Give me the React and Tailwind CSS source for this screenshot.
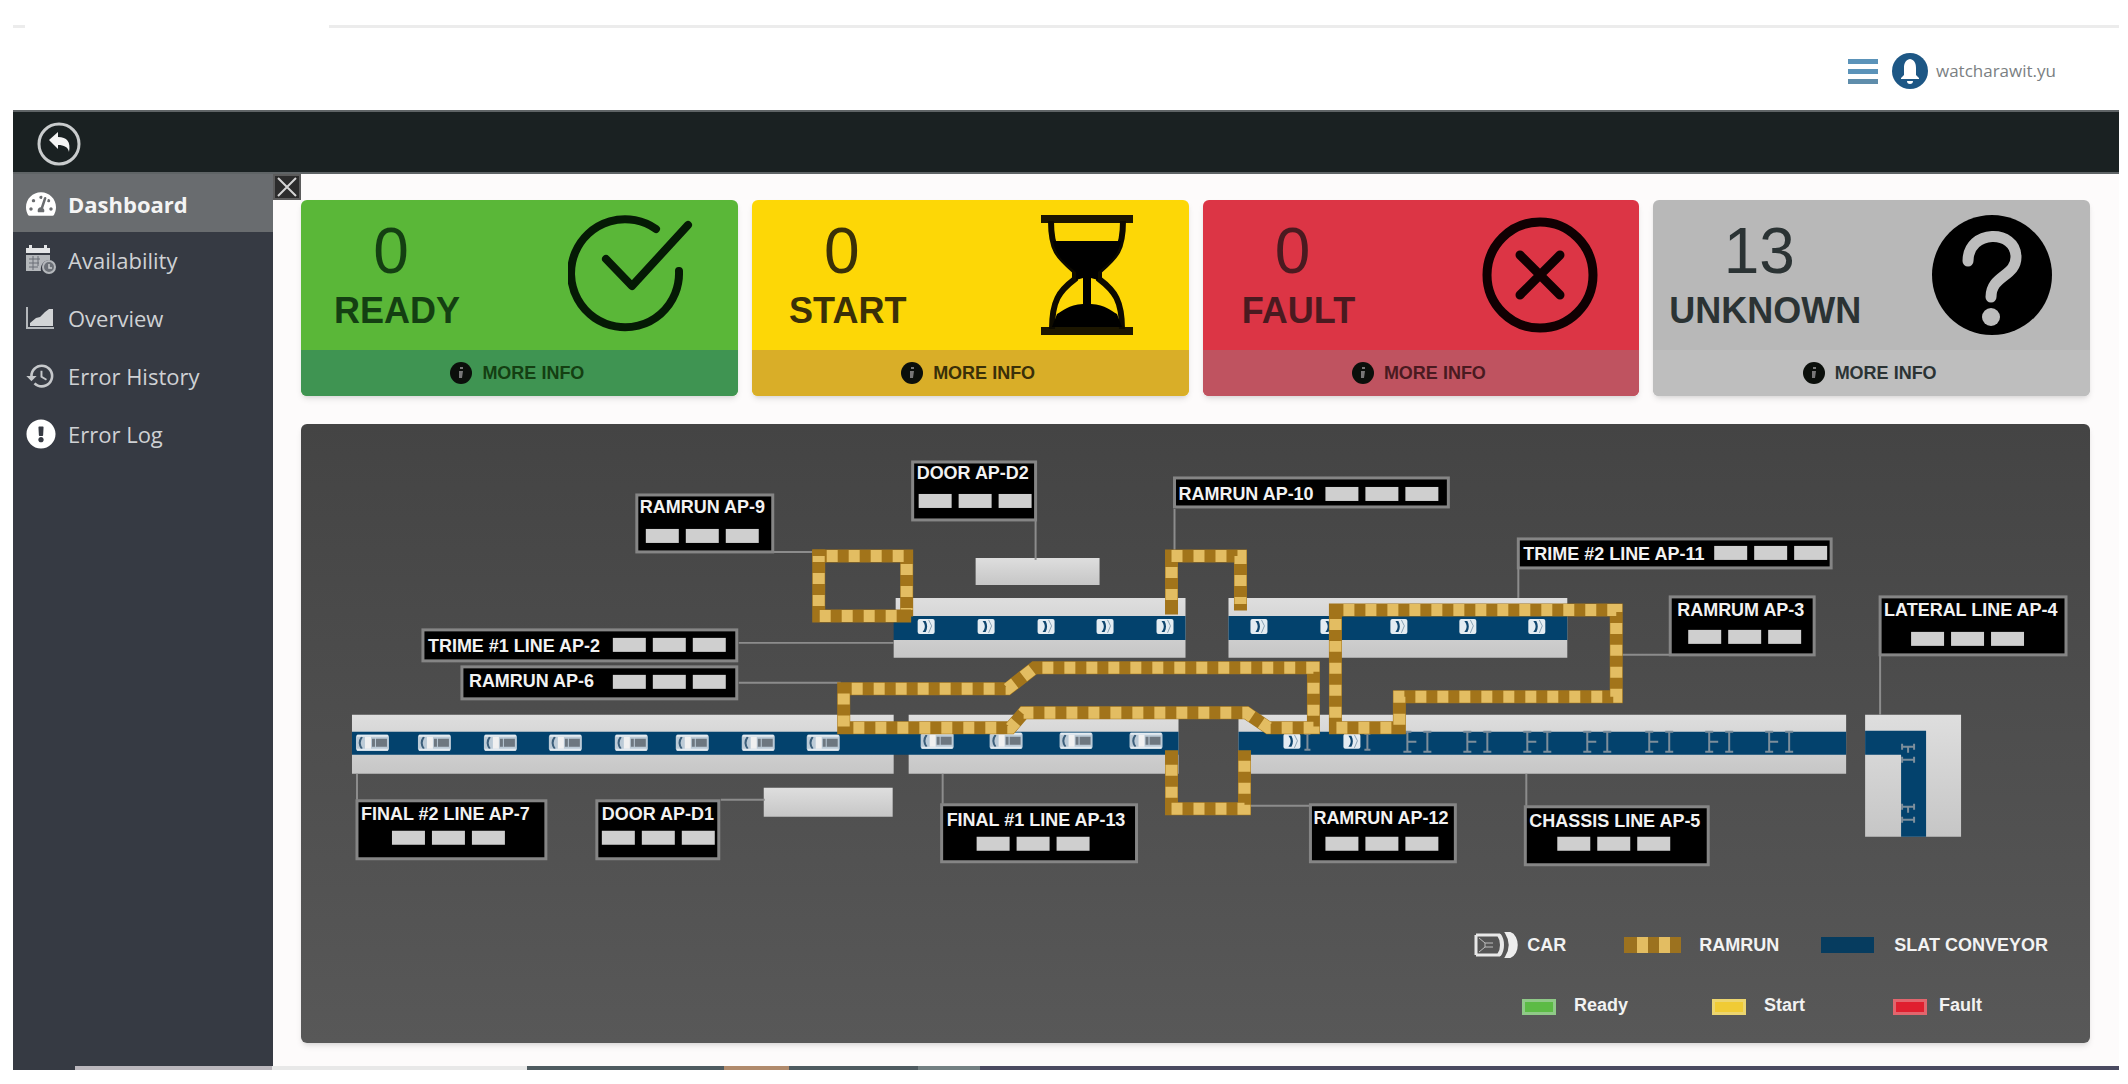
import React from "react";
import { FaTachometerAlt, FaExclamationCircle } from "react-icons/fa";
import { MdHistory } from "react-icons/md";

function CalendarClockIcon() {
  return (
    <svg viewBox="0 0 30 30" className="h-[30px] w-[30px]" aria-hidden="true">
      <path d="M0 3h3V0h3v3h12V0h3v3h3v5H0z" fill="#e4e5e7" />
      <path d="M0 10h24v5a9 9 0 0 0-9 11H0z" fill="#b4b7bb" />
      <path d="M3 14h11M3 18h10M3 22h9M7 11v14M12 11v10" stroke="#6a6e76" strokeWidth="1" />
      <circle cx="23" cy="22" r="6" fill="#6c7077" stroke="#b4b7bb" strokeWidth="2" />
      <path d="M23 19v4h3" fill="none" stroke="#c9cbce" strokeWidth="1.5" />
    </svg>
  );
}

function AreaChartIcon() {
  return (
    <svg viewBox="0 0 30 24" className="h-6 w-[30px]" aria-hidden="true">
      <path d="M1 1v21h27" fill="none" stroke="#b4b7bb" strokeWidth="2" />
      <path d="M4 20v-3l6-5 4-1 5-5 4-3h4v17z" fill="#d2d4d6" />
    </svg>
  );
}

const NAV = [
  { label: "Dashboard", active: true, icon: <FaTachometerAlt size={30} className="text-white" /> },
  { label: "Availability", icon: <CalendarClockIcon /> },
  { label: "Overview", icon: <AreaChartIcon /> },
  { label: "Error History", icon: <MdHistory size={32} className="text-[#c6c8cb]" /> },
  { label: "Error Log", icon: <FaExclamationCircle size={30} className="text-white" /> },
];

function CheckRingIcon() {
  return (
    <svg viewBox="0 0 125 120" className="mr-2.5 h-[120px] w-[125px]" fill="none" stroke="#051a05" strokeWidth="8" strokeLinecap="round" strokeLinejoin="round" aria-hidden="true">
      <path d="M88 14A54 54 0 1 0 111 56" />
      <path d="M38 44l26 27L120 10" />
    </svg>
  );
}

function HourglassIcon() {
  return (
    <svg viewBox="0 0 125 120" className="mr-1 h-[120px] w-[125px]" fill="none" aria-hidden="true">
      <path d="M16 0h92v8H16zM16 112h92v8H16z" fill="#1c1600" />
      <path d="M26 6c0 30 8 36 24 50v8C34 76 27 86 27 114M98 6c0 30-8 36-24 50v8c16 12 23 22 23 50" stroke="#0d0a00" strokeWidth="6" />
      <path d="M28 26h68c-3 16-12 22-23 31v8l-7-2v26c15 1 20 7 26 10l5 13H27l5-13c6-3 11-9 26-10V63l-7 2v-8C40 48 31 42 28 26z" fill="#000" />
    </svg>
  );
}

function CrossRingIcon() {
  return (
    <svg viewBox="0 0 125 120" className="mr-0.5 h-[120px] w-[125px]" fill="none" stroke="#100002" strokeLinecap="round" aria-hidden="true">
      <circle cx="63" cy="60" r="53" strokeWidth="9" />
      <path d="M43 40l40 40M83 40L43 80" strokeWidth="9" />
    </svg>
  );
}

function QuestionDiscIcon() {
  return (
    <svg viewBox="0 0 125 120" className="h-[120px] w-[125px]" fill="none" aria-hidden="true">
      <circle cx="62" cy="60" r="60" fill="#000" />
      <path d="M38 46c0-32 48-32 48-4 0 20-25 18-25 40" stroke="#bdbdbd" strokeWidth="11" strokeLinecap="round" />
      <circle cx="61" cy="102" r="9" fill="#bdbdbd" />
    </svg>
  );
}

const CARDS = [
  { value: "0", label: "READY", icon: <CheckRingIcon />, body: "bg-[#5ab738]", foot: "bg-[#3f9452]", ink: "text-[#143f12]" },
  { value: "0", label: "START", icon: <HourglassIcon />, body: "bg-[#fdd706]", foot: "bg-[#d9ae28]", ink: "text-[#3a3008]" },
  { value: "0", label: "FAULT", icon: <CrossRingIcon />, body: "bg-[#dc3545]", foot: "bg-[#bf5360]", ink: "text-[#4a1a20]" },
  { value: "13", label: "UNKNOWN", icon: <QuestionDiscIcon />, body: "bg-[#b8b8b8]", foot: "bg-[#bebebe]", ink: "text-[#2b3334]" },
];

function StatusCard({ value, label, icon, body, foot, ink }) {
  return (
    <section className={`min-w-0 flex-1 overflow-hidden rounded-md shadow-md ${body} ${ink}`}>
      <div className="flex h-[150px] items-center justify-between pr-[35px]">
        <div className="min-w-48 px-4 text-center">
          <div className="pr-3 pb-3 text-[64px] leading-[60px]">{value}</div>
          <div className="text-4xl leading-9 font-bold">{label}</div>
        </div>
        {icon}
      </div>
      <button type="button" className={`flex h-[46px] w-full items-center justify-center gap-2.5 pr-1 text-lg font-bold ${foot}`}>
        <svg viewBox="0 0 22 22" className="h-[22px] w-[22px]" aria-hidden="true">
          <circle cx="11" cy="11" r="11" fill="#0b0f0b" />
          <path d="M10 5h3v2h-3zM9 9h4l-1 7h-3z" fill="#777" />
        </svg>
        MORE INFO
      </button>
    </section>
  );
}

/* Label boxes: [x, y, width, height, text, text x, baseline, first chip x, chip y] */
const LABELS = [
  [636, 495, 136, 57, "RAMRUN AP-9", 639, 513, 645, 529],
  [912, 462, 123, 58, "DOOR AP-D2", 916, 479, 918, 494],
  [1174, 478, 274, 29, "RAMRUN AP-10", 1178, 500, 1325, 487],
  [422, 630, 314, 31, "TRIME #1 LINE AP-2", 427, 652, 612, 638],
  [461, 667, 275, 32, "RAMRUN AP-6", 468, 687, 612, 675],
  [356, 801, 189, 58, "FINAL #2 LINE AP-7", 360, 820, 391, 831],
  [596, 801, 122, 58, "DOOR AP-D1", 601, 820, 601, 831],
  [941, 805, 195, 57, "FINAL #1 LINE AP-13", 946, 826, 976, 837],
  [1310, 805, 145, 57, "RAMRUN AP-12", 1313, 824, 1325, 837],
  [1518, 539, 313, 29, "TRIME #2 LINE AP-11", 1523, 560, 1714, 546],
  [1670, 597, 144, 58, "RAMRUM AP-3", 1677, 616, 1688, 630],
  [1880, 597, 186, 58, "LATERAL LINE AP-4", 1884, 616, 1911, 632],
  [1525, 807, 183, 58, "CHASSIS LINE AP-5", 1529, 827, 1557, 837],
];

const LEADERS = [
  "M773 552H820", "M1035 521V560", "M1174 509V550", "M738 643H893", "M738 683H840",
  "M356 774V800", "M720 800H764", "M942 774V804", "M1244 806H1310", "M1518 569V598",
  "M1620 655H1670", "M1880 656V715", "M1526 774V806",
];

const RAILS = [
  "M818 556H906V610",
  "M904 616H818V556",
  "M1171 608V556H1240V604",
  "M843 689H1007L1034 668H1313V728H1268L1246 713H1023L1010 728H843V689",
  "M1335 610H1616V697H1399V728H1335V610",
  "M1171 757V809H1244V757",
];

function Rail({ d }) {
  return (
    <g fill="none">
      <path d={d} stroke="#a2741a" strokeWidth="13" strokeLinecap="square" />
      <path d={d} stroke="#e3bd62" strokeWidth="12" strokeDasharray="11 11" strokeDashoffset="-8" />
    </g>
  );
}

function CabFront({ x, y }) {
  return (
    <g>
      <rect x={x} y={y} width="17" height="15" rx="2" fill="#e4ecf2" />
      <path d={`M${x + 5} ${y + 2}c3 4 3 7 0 11h3c2-4 2-7 0-11z`} fill="#0f466f" />
      <path d={`M${x + 11} ${y + 1}l3 6-3 7`} fill="none" stroke="#8aa3b5" strokeWidth="1" />
    </g>
  );
}

function CarBody({ x, y }) {
  return (
    <g>
      <rect x={x} y={y} width="33" height="16" rx="2" fill="#bccbd7" />
      <path d={`M${x + 6} ${y + 2}c-3 4-3 8 0 12`} fill="none" stroke="#3c5f7b" strokeWidth="2" />
      <rect x={x + 9} y={y + 2} width="6" height="12" fill="#f0f0f0" />
      <path d={`M${x + 16} ${y + 4}h3v8h-3zM${x + 20} ${y + 4}h11v8h-11z`} fill="#6d7780" />
      <path d={`M${x + 1} ${y + 1}h31M${x + 1} ${y + 15}h31`} stroke="#e3ebf1" strokeWidth="2" />
    </g>
  );
}

function Chassis({ x, y }) {
  return (
    <path
      d={`M${x} ${y}h8M${x} ${y + 20}h8M${x + 4} ${y}v20M${x + 4} ${y + 10}h9M${x + 20} ${y}h8M${x + 20} ${y + 20}h8M${x + 24} ${y}v20`}
      fill="none"
      stroke="#7d8e9b"
      strokeWidth="2"
    />
  );
}

function ConveyorMap() {
  return (
    <svg
      viewBox="300 424 1790 491"
      className="block w-full"
      fontFamily="'Liberation Sans', Arial, sans-serif"
      fontSize="18"
      fontWeight="700"
      role="img"
      aria-label="Conveyor line map"
    >
      <defs>
        <linearGradient id="deck" x1="0" y1="0" x2="0" y2="1">
          <stop offset="0" stopColor="#dedede" />
          <stop offset="1" stopColor="#c6c6c6" />
        </linearGradient>
      </defs>

      <g fill="url(#deck)">
        <path d="M895 598H1185V658H893V640H895z" />
        <path d="M1228 598H1567V658H1228z" />
        <path d="M351 715H893V774H351z" />
        <path d="M908 715H1178V774H908z" />
        <path d="M1238 715H1846V774H1238z" />
        <path d="M1865 715H1961V837H1865z" />
        <path d="M975 558H1099V585H975z" />
        <path d="M763 788H892V817H763z" />
      </g>
      <g fill="#03426d">
        <path d="M893 616H1185V640H893z" />
        <path d="M1228 616H1567V640H1228z" />
        <path d="M351 732H1178V755H351z" />
        <path d="M1238 732H1846V755H1238z" />
        <path d="M1865 731H1926V837H1901V755H1865z" />
      </g>

      {[355, 417, 483, 548, 614, 675, 741, 806].map((x) => <CarBody key={x} x={x} y={735} />)}
      {[920, 989, 1059, 1129].map((x) => <CarBody key={x} x={x} y={733} />)}
      {[917, 977, 1037, 1096, 1156, 1250, 1320, 1390, 1459, 1528].map((x) => <CabFront key={x} x={x} y={619} />)}
      {[1283, 1343].map((x) => (
        <g key={x}>
          <CabFront x={x} y={734} />
          <path d={`M${x + 21} 734h6M${x + 21} 750h6M${x + 24} 734v16`} fill="none" stroke="#7d8e9b" strokeWidth="2" />
        </g>
      ))}
      {[1403, 1463, 1523, 1583, 1645, 1705, 1765].map((x) => <Chassis key={x} x={x} y={732} />)}
      <path
        d="M1902 744v6M1914 744v6M1902 747h12M1908 747v6M1902 757v6M1914 757v6M1902 760h12M1902 804v6M1914 804v6M1902 807h12M1908 807v6M1902 817v6M1914 817v6M1902 820h12"
        fill="none"
        stroke="#7d8e9b"
        strokeWidth="2"
      />

      <g fill="none" stroke="#8c8c8c" strokeWidth="2">
        {LEADERS.map((d) => <path key={d} d={d} />)}
      </g>
      {RAILS.map((d) => <Rail key={d} d={d} />)}

      {LABELS.map(([x, y, w, h, text, tx, ty, cx, cy]) => (
        <g key={text}>
          <rect x={x} y={y} width={w} height={h} fill="#000" stroke="#858585" strokeWidth="3" />
          <text x={tx} y={ty} fill="#f2f2f2">{text}</text>
          {[0, 1, 2].map((i) => (
            <rect key={i} x={cx + i * 40} y={cy} width="33" height="14" fill="#cfcfcf" />
          ))}
        </g>
      ))}
    </svg>
  );
}

function Legend() {
  return (
    <div className="text-lg leading-[60px] font-bold text-[#f2f2f2]">
      <div className="flex items-center justify-end pr-10">
        <span className="flex items-center gap-2">
          <svg viewBox="0 0 45 26" className="h-[26px] w-[45px]" fill="none" aria-hidden="true">
            <path d="M2 3h24M2 23h24M2 3v20" stroke="#e8e8e8" strokeWidth="3" />
            <path d="M5 6l6 5h8M5 20l6-5h8M11 11v4" stroke="#bdbdbd" strokeWidth="1" />
            <path d="M25 3c4 5 4 15 0 20" stroke="#e8e8e8" strokeWidth="4" />
            <path d="M32 1h4c9 3 9 21 0 24h-4c5-8 5-16 0-24z" fill="#ededed" stroke="#ededed" strokeWidth="2" />
          </svg>
          CAR
        </span>
        <span className="ml-[58px] flex items-center gap-[18px]">
          <svg viewBox="0 0 57 16" className="h-4 w-[57px]" aria-hidden="true">
            <rect width="57" height="16" fill="#9c721f" />
            <path d="M13 0h11v16H13zM35 0h11v16H35z" fill="#e3bd62" />
          </svg>
          RAMRUN
        </span>
        <span className="ml-[42px] flex items-center gap-5 pr-0.5">
          <span className="h-4 w-[53px] bg-[#063c5f]" />
          SLAT CONVEYOR
        </span>
      </div>
      <div className="flex items-center justify-end pr-[108px]">
        <span className="flex items-center gap-[18px]">
          <span className="mt-1 h-4 w-[34px] border-3 border-[#8fc987] bg-[#5cbb45]" />
          Ready
        </span>
        <span className="ml-[84px] flex items-center gap-[18px]">
          <span className="mt-1 h-4 w-[34px] border-3 border-[#ecd56f] bg-[#f0cb35]" />
          Start
        </span>
        <span className="ml-[88px] flex items-center gap-3">
          <span className="mt-1 h-4 w-[34px] border-3 border-[#e2656d] bg-[#e01f2f]" />
          Fault
        </span>
      </div>
    </div>
  );
}

export default function App() {
  return (
    <div className="flex min-h-screen flex-col bg-white pr-[9px] pb-3.5 pl-[13px] font-['Liberation_Sans',Arial,sans-serif]">
      <header className="flex h-[110px] flex-col pt-[25px]">
        <div className="flex justify-between">
          <span className="h-[3px] w-3 bg-[#ececec]" />
          <span className="ml-[304px] h-[3px] flex-1 bg-[#ececec]" />
        </div>
        <div className="flex h-[82px] items-center justify-end gap-2 pt-1 pr-[63px] font-['Open_Sans','Noto_Sans',sans-serif] text-[17px] text-[#7b7f83]">
          <button type="button" aria-label="Menu" className="mr-1.5 flex flex-col gap-[5px]">
            <span className="h-[5px] w-[30px] bg-[#5b93b9]" />
            <span className="h-[5px] w-[30px] bg-[#5b93b9]" />
            <span className="h-[5px] w-[30px] bg-[#5f8dab]" />
          </button>
          <button type="button" aria-label="Notifications">
            <svg viewBox="0 0 36 36" className="h-9 w-9">
              <circle cx="18" cy="18" r="18" fill="#1d5785" />
              <path d="M18 6c-5 1-6 5-6 9v7l-3 3v1h18v-1l-3-3v-7c0-4-1-8-6-9zM15 28h6a3 3 0 0 1-6 0z" fill="#fff" />
            </svg>
          </button>
          <span>watcharawit.yu</span>
        </div>
      </header>

      <div className="flex h-16 shrink-0 items-center border-y-2 border-[#5f6466] bg-[#1a2122] pt-1 pl-6">
        <button type="button" aria-label="Back">
          <svg viewBox="0 0 44 44" className="h-11 w-11" aria-hidden="true">
            <circle cx="22" cy="22" r="20" fill="none" stroke="#c9cccd" strokeWidth="3" />
            <path d="M12 18l9-8v5c9 0 13 5 11 15-1-5-5-7-11-7v4z" fill="#f4f4f4" />
          </svg>
        </button>
      </div>

      <div className="flex flex-1">
        <nav className="w-[260px] shrink-0 bg-[#363a43] font-['Open_Sans','Noto_Sans',sans-serif] text-[22px]">
          {NAV.map(({ label, icon, active }) => (
            <a
              key={label}
              href="#"
              aria-current={active ? "page" : undefined}
              className={
                active
                  ? "flex h-[58px] items-center gap-3 bg-[#696c6f] pt-0.5 pl-3 font-bold text-[#f4f4f4]"
                  : "flex h-[58px] items-center gap-3 pb-0.5 pl-3 text-[#cfd1d4]"
              }
            >
              <span className="flex w-[31px] justify-center">{icon}</span>
              {label}
            </a>
          ))}
        </nav>

        <main className="flex min-w-0 flex-1 bg-[#fdfbfb]">
          <button type="button" aria-label="Close menu" className="h-[26px] w-7 shrink-0 bg-[#2c2c2c]">
            <svg viewBox="0 0 28 26" className="h-[26px] w-7" aria-hidden="true">
              <path d="M5 4l18 18M23 4L5 22" stroke="#d5d5d5" strokeWidth="2" />
              <path d="M1 1h26v24H1z" fill="none" stroke="#5c5c5c" strokeWidth="2" />
            </svg>
          </button>
          <div className="flex min-w-0 flex-1 flex-col gap-7 pt-[26px] pr-[29px] pb-[22px]">
            <div className="flex gap-3.5">
              {CARDS.map((card) => <StatusCard key={card.label} {...card} />)}
            </div>
            <section className="overflow-hidden rounded-md bg-linear-to-b from-[#444444] to-[#585858] pb-2 shadow-md">
              <ConveyorMap />
              <Legend />
            </section>
          </div>
        </main>
      </div>

      <div className="flex h-1 shrink-0" aria-hidden="true">
        <span className="w-[62px] bg-[#363a43]" />
        <span className="w-[197px] bg-[#bbb7bd]" />
        <span className="w-[255px] bg-[#e8e8e8]" />
        <span className="w-[197px] bg-[#4f5b60]" />
        <span className="w-[65px] bg-[#b08a6c]" />
        <span className="w-[129px] bg-[#4f5b60]" />
        <span className="w-[62px] bg-[#738082]" />
        <span className="flex-1 bg-[#4a4a60]" />
      </div>
    </div>
  );
}
